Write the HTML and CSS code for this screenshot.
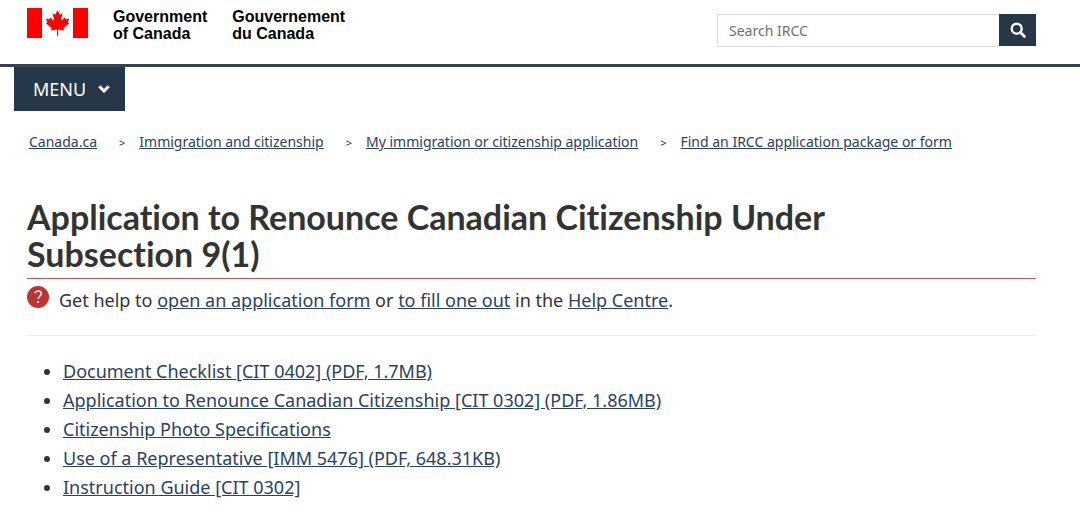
FILE: index.html
```
<!DOCTYPE html>
<html lang="en">
<head>
<meta charset="utf-8">
<meta name="viewport" content="width=device-width, initial-scale=1">
<title>Application to Renounce Canadian Citizenship Under Subsection 9(1)</title>
<link rel="stylesheet" href="styles.css">
</head>
<body>
<header class="site-header">
  <div class="brand-bar">
    <a class="brand" href="#" aria-label="Government of Canada">
      <svg class="flag" viewBox="0 0 61 30" width="61" height="30" aria-hidden="true">
        <path fill="#f00" d="M0 0h15v30H0zM46 0h15v30H46z"/>
        <path fill="#f00" transform="translate(17.8 2.2) scale(.05)" d="M383.8 351.7c2.500-2.500 105.200-92.400 105.200-92.400l-17.500-7.500c-10-4.900-7.400-11.500-5-17.400 2.400-7.600 20.100-67.300 20.100-67.300s-47.700 10-57.700 12.500c-7.500 2.400-10-2.500-12.500-7.500s-15-32.400-15-32.400-52.600 59.900-55.100 62.300c-10 7.500-20.100 0-17.600-10 0-10 27.600-129.600 27.600-129.600s-30.100 17.400-40.100 22.400c-7.500 5-12.600 5-17.600-5C293.500 72.300 255.900 0 255.900 0s-37.500 72.300-42.500 79.800c-5 10-10 10-17.600 5-10-5-40.100-22.400-40.100-22.400S183.300 182 183.300 192c2.500 10-7.500 17.500-17.600 10-2.500-2.500-55.100-62.300-55.100-62.300S98.100 167 95.600 172s-5 9.900-12.500 7.500C73 177 25.400 167 25.400 167s17.600 59.700 20.100 67.300c2.400 6 5 12.500-5 17.400L23 259.300s102.600 89.900 105.200 92.400c5.100 5 10 7.500 5.100 22.500-5.100 15-10.100 35.100-10.100 35.100s95.200-20.100 105.300-22.600c8.700-.9 18.300 2.500 18.300 12.500S241 512 241 512h30s-5.800-102.700-5.800-112.800 9.500-13.400 18.400-12.500c10 2.500 105.200 22.600 105.200 22.600s-5-20.100-10.100-35.100 0-17.500 5-22.500z"/>
      </svg>
      <span class="wordmark">Government<br>of Canada</span>
      <span class="wordmark" lang="fr">Gouvernement<br>du Canada</span>
    </a>
    <form class="search" role="search">
      <input class="search-input" type="search" placeholder="Search IRCC" aria-label="Search IRCC">
      <button class="search-button" type="submit" aria-label="Search">
        <svg viewBox="0 0 16 16" width="16" height="16" fill="none" stroke="#fff" aria-hidden="true">
          <circle cx="6.700" cy="6.700" r="5" stroke-width="2.400"/>
          <path d="M10.500 10.500l4 4" stroke-width="2.800" stroke-linecap="round"/>
        </svg>
      </button>
    </form>
  </div>
  <nav class="menu-bar" aria-label="Menu">
    <button class="menu-button" type="button" aria-expanded="false">MENU
      <svg viewBox="0 0 12 8" width="12" height="8" fill="none" stroke="#fff" stroke-width="3" aria-hidden="true"><path d="M1.300 1.300L6 6l4.700-4.700"/></svg>
    </button>
  </nav>
</header>
<nav aria-label="Breadcrumb">
  <ol class="breadcrumb">
    <li><a href="#">Canada.ca</a></li>
    <li><a href="#">Immigration and citizenship</a></li>
    <li><a href="#">My immigration or citizenship application</a></li>
    <li><a href="#">Find an IRCC application package or form</a></li>
  </ol>
</nav>
<main class="content">
  <h1 class="title"><span class="title-text">Application to Renounce Canadian Citizenship Under Subsection 9(1)</span></h1>
  <div class="help">
    <svg class="help-icon" viewBox="0 0 22 22" width="22" height="22" aria-hidden="true">
      <circle cx="11" cy="11" r="11" fill="#bc3331"/>
      <path d="M7.800 7.300c.6-1.500 1.800-2.200 3.400-2.200 1.900 0 3.100 1 3.100 2.600 0 2.600-3.200 2.600-3.200 5.400" fill="none" stroke="#fff" stroke-width="1.500"/>
      <circle cx="11" cy="15.900" r="1.100" fill="#fff"/>
    </svg>
    <p class="help-text">Get help to <a href="#">open an application form</a> or <a href="#">to fill one out</a> in the <a href="#">Help Centre</a>.</p>
  </div>
  <ul class="documents">
    <li><a href="#">Document Checklist [CIT 0402] (PDF, 1.7MB)</a></li>
    <li><a href="#">Application to Renounce Canadian Citizenship [CIT 0302] (PDF, 1.86MB)</a></li>
    <li><a href="#">Citizenship Photo Specifications</a></li>
    <li><a href="#">Use of a Representative [IMM 5476] (PDF, 648.31KB)</a></li>
    <li><a href="#">Instruction Guide [CIT 0302]</a></li>
  </ul>
</main>
</body>
</html>
```
FILE: styles.css
```
* {
  box-sizing: border-box;
}

body {
  margin: 0;
  background: #fff;
  color: #333;
  font: 18px/29px "Noto Sans", sans-serif;
}

a {
  color: #284162;
}

.brand-bar {
  display: flex;
  justify-content: space-between;
  align-items: flex-start;
  padding: 8px 44px 17px 27px;
  border-bottom: 3px solid #38424f;
}

.brand {
  display: flex;
  gap: 25px;
  height: 30px;
  color: #000;
  text-decoration: none;
}

.flag {
  display: block;
}

.wordmark {
  font: bold 16px/17px "Liberation Sans", Arial, sans-serif;
}

.search {
  display: flex;
  flex: 0 1 319px;
  margin-top: 6px;
}

.search-input {
  flex: 1;
  min-width: 0;
  height: 33px;
  padding: 0 11px;
  border: 1px solid #ddd;
  border-right: 0;
  border-radius: 0;
  appearance: none;
  background: #fff;
  color: #333;
  font: 14px "Noto Sans", sans-serif;
}

.search-input::placeholder {
  color: #6f6f6f;
}

.search-button {
  display: flex;
  align-items: center;
  justify-content: center;
  width: 37px;
  height: 32px;
  padding: 0;
  border: 0;
  background: #26374a;
}

.menu-bar {
  padding-left: 14px;
}

.menu-button {
  display: flex;
  align-items: center;
  gap: 12px;
  height: 44px;
  padding: 0 15px 0 19px;
  border: 0;
  background: #26374a;
  color: #fff;
  font: 18px "Noto Sans", sans-serif;
}

.breadcrumb {
  display: flex;
  flex-wrap: wrap;
  margin: 19px 44px 0 29px;
  padding: 0;
  list-style: none;
  font-size: 14px;
  line-height: 24px;
}

.breadcrumb li + li::before {
  content: ">";
  margin: 0 14px 0 22px;
  font-size: 11px;
}

.content {
  padding: 0 44px 0 27px;
}

.title {
  margin: 43px 0 0;
  padding-bottom: 6px;
  border-bottom: 1px solid #c4565b;
  font: bold 34px/37px Lato, sans-serif;
  font-variant-ligatures: none;
}

.title-text {
  display: block;
  max-width: 860px;
}

.help {
  display: flex;
  gap: 10px;
  padding: 7px 0 20px;
  border-bottom: 1px solid #eee;
}

.help-icon {
  flex: none;
}

.help-text {
  margin: 0;
}

.documents {
  margin: 21px 0 0;
  padding-left: 36px;
}
```
